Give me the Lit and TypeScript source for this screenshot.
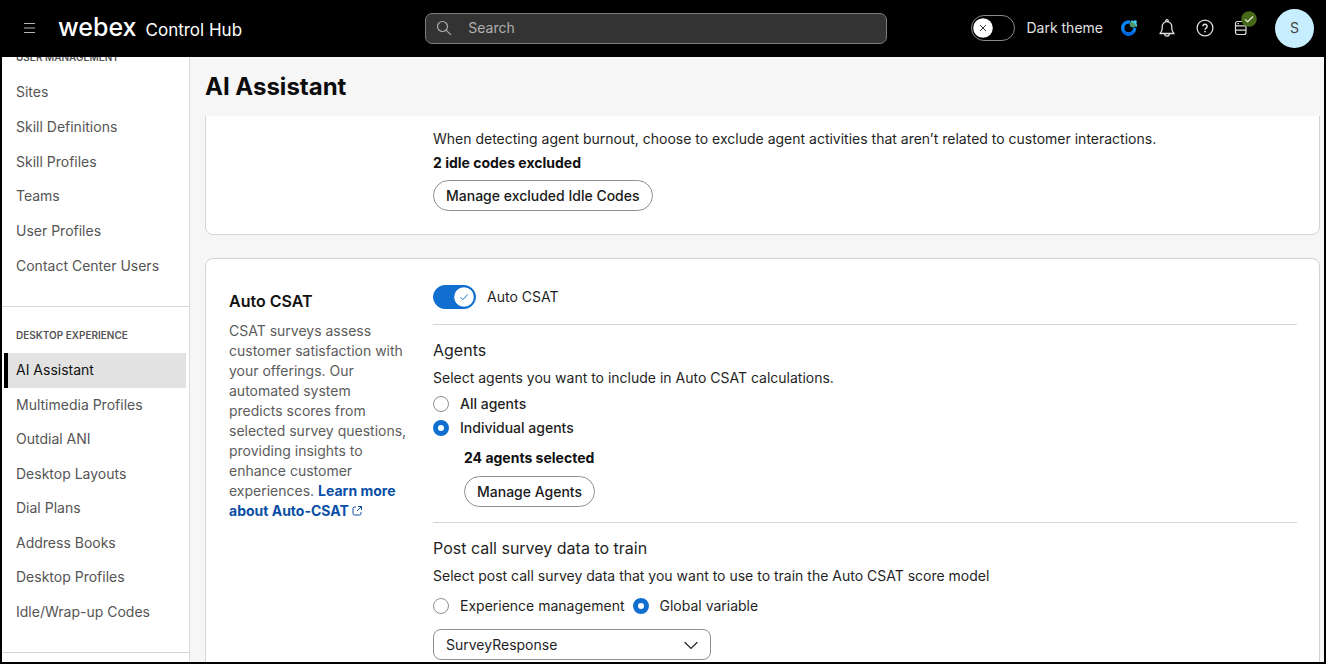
import { LitElement, html, css, svg } from "lit";
import { customElement, property, state } from "lit/decorators.js";
import { classMap } from "lit/directives/class-map.js";

const base = css`
  * { box-sizing: border-box; }
  h1, h2, h3, p, ul { margin: 0; padding: 0; }
  button, input, select { font: inherit; margin: 0; }
`;

@customElement("hub-switch")
class HubSwitch extends LitElement {
  static styles = [base, css`
    :host { display: block; }
    label { display: flex; align-items: center; gap: 11px; cursor: pointer; }
    .track { display: grid; grid-template: 24px / 43px; align-items: center; }
    .track > * { grid-area: 1 / 1; }
    input { appearance: none; width: 43px; height: 24px; border: 1px solid #8a8a8a; border-radius: 12px; background: #000; }
    input:checked { background: #1170cf; border-color: #1170cf; }
    .knob { width: 20px; height: 20px; margin-left: 2px; pointer-events: none; }
    .knob.on { justify-self: end; margin-right: 2px; }
    .track.large { grid-template: 26px / 44px; }
    .large input { width: 44px; height: 26px; border-radius: 13px; }
  `];
  @property() label = "";
  @property({ type: Boolean }) on = false;
  @property({ type: Boolean }) large = false;
  render() {
    return html`<label>
      <span class=${classMap({ track: true, large: this.large })}>
        <input type="checkbox" .checked=${this.on} @change=${(e: Event) => (this.on = (e.target as HTMLInputElement).checked)} />
        <svg class=${classMap({ knob: true, on: this.on })} viewBox="0 0 20 20" fill="none">
          <circle cx="10" cy="10" r="9.8" fill="#fff" />
          ${this.on
            ? svg`<path d="M6.5 10.4l2.4 2.2 4.7-5" stroke="#1170cf" />`
            : svg`<path d="M7 7l6 6M13 7l-6 6" stroke="#333" />`}
        </svg>
      </span>
      <span>${this.label}</span>
    </label>`;
  }
}

@customElement("hub-header")
class HubHeader extends LitElement {
  static styles = [base, css`
    :host { display: grid; grid-template-columns: 19fr 462px 20fr; align-items: center; height: 55px; background: #000; color: #e0e0e0; flex: none; padding: 0 10px 3px 18px; }
    button { border: 0; background: none; padding: 0; color: inherit; display: grid; place-items: center; cursor: pointer; }
    .brand { display: flex; align-items: center; gap: 18px; }
    .name { display: flex; align-items: baseline; gap: 9px; color: #fff; }
    .logo { font-size: 25px; line-height: 28px; font-weight: 500; }
    .product { font-size: 17px; line-height: 28px; }
    .search { display: flex; align-items: center; gap: 16px; height: 31px; padding: 0 10px; border: 1px solid #7c7c7c; border-radius: 7px; background: #333; color: #aaa; }
    .search input { flex: 1; min-width: 0; border: 0; outline: 0; padding: 0; background: none; color: #fff; }
    .search input::placeholder { color: #b0b0b0; opacity: 1; }
    .tools { display: flex; justify-content: flex-end; align-items: center; }
    .icons { display: flex; align-items: center; gap: 18px; margin: 0 26px 0 16px; }
    .avatar { width: 39px; height: 39px; border-radius: 50%; background: #c7eeff; color: #444; }
    .server { position: relative; }
    .badge { position: absolute; left: 8px; top: -7px; }
  `];
  render() {
    return html`
      <div class="brand">
        <button aria-label="Menu"><svg width="20" height="20" viewBox="0 0 20 20"><path d="M4 5.5h11M4 10h11M4 14.5h11" stroke="#b5b5b5" /></svg></button>
        <div class="name"><span class="logo">webex</span><span class="product">Control Hub</span></div>
      </div>
      <label class="search">
        <svg width="16" height="16" viewBox="0 0 16 16" fill="none" stroke="currentColor" stroke-width="1.2"><circle cx="6.5" cy="6.5" r="5" /><path d="M10.3 10.3l4.4 4.4" stroke-linecap="round" /></svg>
        <input type="text" placeholder="Search" aria-label="Search" />
      </label>
      <div class="tools">
        <hub-switch label="Dark theme" large></hub-switch>
        <div class="icons">
          <button aria-label="Webex assistant"><svg width="20" height="20" viewBox="0 0 20 20" fill="none">
            <path d="M15.6 11.200a6 6 0 1 1-5.800-7.200" stroke="#0b84f3" stroke-width="3.400" stroke-linecap="round" />
            <path d="M4.600 13.800a6 6 0 0 0 10 0" stroke="#0064e0" stroke-width="2.600" />
            <circle cx="14" cy="6.200" r="3.200" fill="#4f9a6c" />
            <path d="M12.600 3.200a5 5 0 0 1 4.800 4.800" stroke="#45d3ee" stroke-width="1.400" stroke-linecap="round" />
            <circle cx="16.200" cy="4" r="1.700" fill="#45d3ee" />
          </svg></button>
          <button aria-label="Notifications"><svg width="20" height="20" viewBox="0 0 20 20" fill="none" stroke="currentColor" stroke-width="1.3" stroke-linejoin="round">
            <path d="M3 15.500c1.500-1.500 2.200-3 2.200-5V8.500a4.800 4.800 0 0 1 9.600 0v2c0 2 .7 3.500 2.200 5zM8.800 3.600v-.8a1.200 1.200 0 0 1 2.400 0v.8M7.700 15.700a2.300 2.400 0 0 0 4.600 0" />
          </svg></button>
          <button aria-label="Help"><svg width="20" height="20" viewBox="0 0 20 20" fill="none" stroke="currentColor" stroke-width="1.3">
            <circle cx="10" cy="10" r="7.9" /><path d="M7.900 8.300a2.100 2.100 0 1 1 3.200 1.800c-.8.5-1.100.8-1.100 1.700" stroke-width="1.500" /><circle cx="10" cy="13.600" r=".9" fill="currentColor" stroke="none" />
          </svg></button>
          <button class="server" aria-label="Service status">
            <svg width="16" height="20" viewBox="0 0 16 20" fill="none" stroke="currentColor" stroke-width="1.2"><rect x="2.500" y="3.500" width="10.500" height="13" rx="2" /><path d="M2.500 7.800h10.500M2.500 12.200h10.500M4.500 5.700h1.500" /></svg>
            <svg class="badge" width="16" height="16" viewBox="0 0 16 16" fill="none"><circle cx="8" cy="8" r="7.800" fill="#466a17" /><path d="M4 8.400l2.600 2.300L12 5.500" stroke="#eee" stroke-width="1.200" /></svg>
          </button>
        </div>
        <button class="avatar" aria-label="Account">S</button>
      </div>`;
  }
}

@customElement("hub-sidebar")
class HubSidebar extends LitElement {
  static styles = [base, css`
    :host { display: block; flex: none; width: 188px; overflow: hidden; border-right: 1px solid #dcdcdc; background: #fff; color: #555; }
    section { border-bottom: 1px solid #d6d6d6; padding: 20px 3px 23px 2px; }
    section:first-child { margin-top: -28px; }
    h2 { padding-left: 12px; font-size: 10px; line-height: 16px; font-weight: 600; margin-bottom: 10px; }
    ul { list-style: none; display: grid; grid-auto-rows: 1fr; }
    .short { min-height: 208px; }
    .long { min-height: 276px; }
    a { display: flex; align-items: center; height: 100%; padding-left: 8px; border-left: 4px solid transparent; color: inherit; text-decoration: none; }
    a.current { background: #e2e2e2; border-color: #000; color: #111; }
  `];
  private groups = [
    { title: "USER MANAGEMENT", size: "short", items: ["Sites", "Skill Definitions", "Skill Profiles", "Teams", "User Profiles", "Contact Center Users"] },
    { title: "DESKTOP EXPERIENCE", size: "long", items: ["AI Assistant", "Multimedia Profiles", "Outdial ANI", "Desktop Layouts", "Dial Plans", "Address Books", "Desktop Profiles", "Idle/Wrap-up Codes"] },
  ];
  render() {
    return html`<nav>${this.groups.map((g) => html`<section>
      <h2>${g.title}</h2>
      <ul class=${g.size}>${g.items.map((t) => html`<li><a href="#" class=${classMap({ current: t === "AI Assistant" })}>${t}</a></li>`)}</ul>
    </section>`)}</nav>`;
  }
}

@customElement("app-root")
class AppRoot extends LitElement {
  static styles = [base, css`
    :host { display: flex; flex-direction: column; height: 100vh; box-sizing: border-box; border: 2px solid #000; overflow: hidden; background: #f6f6f6; color: #1f1f1f; font: 14px/20px Inter, sans-serif; }
    .body { display: flex; flex: 1; min-height: 0; }
    main { display: flex; flex-direction: column; flex: 1; min-width: 0; padding: 0 4px 0 15px; }
    h1 { flex: none; padding: 14px 0 13px; font-size: 24px; line-height: 32px; font-weight: 700; color: #0c0c0c; }
    .scroll { flex: 1; min-height: 0; overflow: hidden; }
    .card { display: grid; grid-template-columns: 178px 1fr; column-gap: 26px; padding: 24px 22px 23px 23px; border: 1px solid #d4d4d4; border-radius: 8px; background: #fff; margin-bottom: 23px; }
    .card:first-child { margin-top: -44px; }
    .detail { grid-column: 2; }
    h2 { font-size: 16px; line-height: 24px; font-weight: 600; color: #111; }
    h3 { font-size: 16px; line-height: 24px; font-weight: 400; }
    .lead { padding-top: 6px; }
    .lead p { margin-top: 8px; color: #5c5c5c; }
    .lead a { color: #0a4fa6; font-weight: 700; text-decoration: none; }
    .strong { font-weight: 700; color: #111; }
    .idle h3 { margin-bottom: 8px; }
    .idle .strong { margin: 4px 0 7px; }
    .pill { height: 31px; padding: 0 12px; border: 1px solid #8f8f8f; border-radius: 16px; background: #fff; color: #1a1a1a; font-weight: 500; cursor: pointer; }
    .part { border-top: 1px solid #d4d4d4; padding-top: 13px; }
    .part h3 { margin-bottom: 6px; }
    .toggle { display: block; padding: 2px 0 15px; }
    .choice { display: flex; align-items: center; gap: 11px; }
    .choice input { appearance: none; flex: none; width: 16px; height: 16px; border: 1px solid #8f8f8f; border-radius: 50%; background: #fff; }
    .choice input:checked { border: 5px solid #1170cf; }
    .choices { display: grid; gap: 4px; padding-top: 6px; font-weight: 500; }
    .nested { padding: 10px 0 15px 31px; }
    .nested .strong { margin-bottom: 8px; }
    .inline { display: flex; gap: 8px; padding: 10px 0 13px; }
    .select { display: grid; width: 278px; align-items: center; }
    .select > * { grid-area: 1 / 1; }
    select { appearance: none; width: 100%; height: 31px; padding: 0 12px; border: 1px solid #8f8f8f; border-radius: 8px; background: #fff; color: inherit; }
    .chevron { justify-self: end; margin-right: 13px; pointer-events: none; }
  `];
  @state() private agents = "Individual agents";
  @state() private source = "Global variable";

  private radio(name: "agents" | "source", label: string) {
    return html`<label class="choice">
      <input type="radio" name=${name} .checked=${this[name] === label} @change=${() => (this[name] = label)} /><span>${label}</span>
    </label>`;
  }

  render() {
    return html`
      <hub-header></hub-header>
      <div class="body">
        <hub-sidebar></hub-sidebar>
        <main>
          <h1>AI Assistant</h1>
          <div class="scroll">
            <section class="card">
              <div class="detail idle">
                <h3>Exclude Idle Codes</h3>
                <p>When detecting agent burnout, choose to exclude agent activities that aren’t related to customer interactions.</p>
                <p class="strong">2 idle codes excluded</p>
                <button class="pill">Manage excluded Idle Codes</button>
              </div>
            </section>
            <section class="card">
              <div class="lead">
                <h2>Auto CSAT</h2>
                <p>CSAT surveys assess customer satisfaction with your offerings. Our automated system predicts scores from selected survey questions, providing insights to enhance customer experiences. <a href="#">Learn more about Auto-CSAT <svg width="10" height="10" viewBox="0 0 10 10" fill="none" stroke="currentColor"><path d="M4 1H2.500A1.500 1.500 0 0 0 1 2.500v5A1.500 1.500 0 0 0 2.500 9h5A1.500 1.500 0 0 0 9 7.500V6M6 .5h3.500V4M9.300.7L5 5" /></svg></a></p>
              </div>
              <div class="detail">
                <hub-switch class="toggle" label="Auto CSAT" on></hub-switch>
                <div class="part">
                  <h3>Agents</h3>
                  <p>Select agents you want to include in Auto CSAT calculations.</p>
                  <div class="choices">${this.radio("agents", "All agents")}${this.radio("agents", "Individual agents")}</div>
                  <div class="nested">
                    <p class="strong">24 agents selected</p>
                    <button class="pill">Manage Agents</button>
                  </div>
                </div>
                <div class="part">
                  <h3>Post call survey data to train</h3>
                  <p>Select post call survey data that you want to use to train the Auto CSAT score model</p>
                  <div class="inline">${this.radio("source", "Experience management")}${this.radio("source", "Global variable")}</div>
                  <div class="select">
                    <select aria-label="Global variable"><option>SurveyResponse</option></select>
                    <svg class="chevron" width="14" height="14" viewBox="0 0 14 14" fill="none" stroke="#222" stroke-width="1.2" stroke-linecap="round"><path d="M1 4.500l6 6 6-6" /></svg>
                  </div>
                </div>
              </div>
            </section>
          </div>
        </main>
      </div>`;
  }
}
